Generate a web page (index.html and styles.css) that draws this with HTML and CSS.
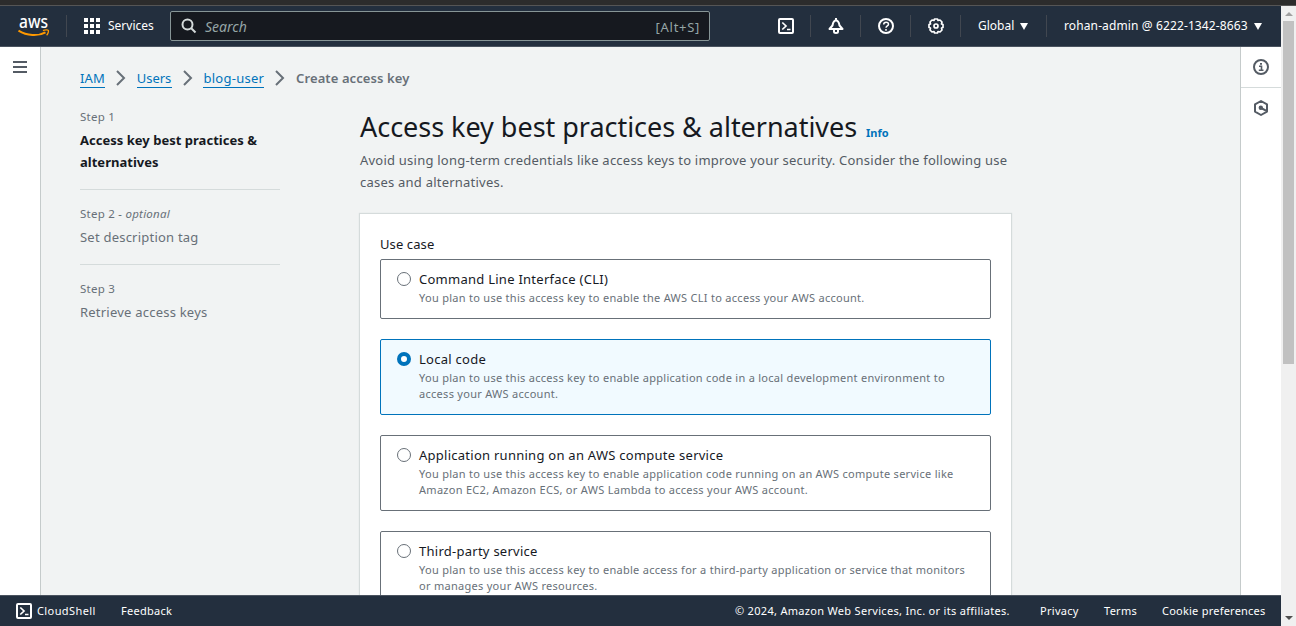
FILE: index.html
```html
<!DOCTYPE html>
<html lang="en">
<head>
<meta charset="utf-8">
<title>Create access key | IAM</title>
<link rel="stylesheet" href="styles.css">
</head>
<body>
<div class="window-edge"></div>
<div class="window">
  <div class="page">
    <header class="topbar">
      <svg class="logo" width="32" height="24" viewBox="0 0 32 24"><text class="logo-text" x="1" y="12.500" textLength="29" lengthAdjust="spacingAndGlyphs">aws</text><path d="M.5 15.700C9 21 20 21.500 27.500 17.300" fill="none" stroke="#f90" stroke-width="2"/><path d="M25 15.700c2-1 4.800-1 5.300-.400.500.8-.2 3.500-1.700 5" fill="none" stroke="#f90" stroke-width="1.300"/></svg>
      <span class="rule rule-logo"></span>
      <svg class="grid-icon" width="16" height="16" viewBox="0 0 16 16" fill="#fff"><path d="M0 0h4v4H0zM6 0h4v4H6zM12 0h4v4h-4zM0 6h4v4H0zM6 6h4v4H6zM12 6h4v4h-4zM0 12h4v4H0zM6 12h4v4H6zM12 12h4v4h-4z"/></svg>
      <span class="services">Services</span>
      <div class="search">
        <svg width="16" height="16" viewBox="0 0 16 16" fill="none" stroke="#d5dbdb" stroke-width="2"><circle cx="6.500" cy="6.500" r="5"/><path d="M10 10l4.500 4.500"/></svg>
        <span class="search-hint">Search</span><span class="search-key">[Alt+S]</span>
      </div>
      <nav class="tools">
        <span class="tool"><svg width="16" height="16" viewBox="0 0 16 16" fill="none" stroke="#fff" stroke-width="2"><rect x="1" y="1" width="14" height="14" rx="1"/><path d="M4.300 4.500L8 8l-3.700 3.500M9 11.500h3.500" stroke-width="1.700"/></svg></span>
        <span class="tool"><svg width="16" height="16" viewBox="0 0 16 16" fill="none" stroke="#fff" stroke-width="2"><path d="M8 0v2M1.500 11h13L11.500 7.500C11 4.500 10 2.500 8 2.500S5 4.500 4.500 7.500z" stroke-linejoin="round"/><path d="M6 12v1.500c0 2 4 2 4 0V12"/></svg></span>
        <span class="tool"><svg width="16" height="16" viewBox="0 0 16 16" fill="none" stroke="#fff" stroke-width="2"><circle cx="8" cy="8" r="7"/><path d="M5.700 6.500c0-3.200 4.800-3 4.800-.3C10.500 8 8 7.800 8 9.800M8 11v1.700" stroke-width="1.500"/></svg></span>
        <span class="tool"><svg width="16" height="16" viewBox="0 0 16 16" fill="none" stroke="#fff" stroke-width="1.700"><path d="M6.500 1h3l.5 1.500 2-.5 2 2-.5 2 1.500.5v3L13.500 10l.5 2-2 2-2-.5-.5 1.500h-3L6 13.500 4 14l-2-2 .5-2L1 9.500v-3L2.500 6 2 4l2-2 2 .5z" stroke-linejoin="round"/><circle cx="8" cy="8" r="2"/></svg></span>
      </nav>
      <span class="region">Global</span><span class="caret"></span>
      <span class="rule rule-account"></span>
      <span class="account">rohan-admin @ 6222-1342-8663</span><span class="caret"></span>
    </header>
    <div class="body">
      <aside class="side-left"><svg width="14" height="12" viewBox="0 0 14 12"><path d="M0 1h14M0 6h14M0 11h14" stroke="#545b64" stroke-width="2"/></svg></aside>
      <main class="content">
        <nav class="crumbs">
          <a class="crumb crumb-iam">IAM</a><svg class="chevron" width="10" height="16" viewBox="0 0 10 16"><path d="M1 1l7 7-7 7"/></svg>
          <a class="crumb crumb-users">Users</a><svg class="chevron" width="10" height="16" viewBox="0 0 10 16"><path d="M1 1l7 7-7 7"/></svg>
          <a class="crumb crumb-blog">blog-user</a><svg class="chevron" width="10" height="16" viewBox="0 0 10 16"><path d="M1 1l7 7-7 7"/></svg>
          <span class="crumb-current">Create access key</span>
        </nav>
        <div class="columns">
          <ol class="steps">
            <li class="step step-active"><div class="step-no">Step 1</div><div class="step-name">Access key best practices &amp;<br>alternatives</div></li>
            <li class="step"><div class="step-no">Step 2 <i>- optional</i></div><div class="step-name">Set description tag</div></li>
            <li class="step"><div class="step-no">Step 3</div><div class="step-name">Retrieve access keys</div></li>
          </ol>
          <section class="wizard">
            <div class="title-row"><h1 class="title">Access key best practices &amp; alternatives</h1><a class="info">Info</a></div>
            <p class="intro">Avoid using long-term credentials like access keys to improve your security. Consider the following use<br>cases and alternatives.</p>
            <div class="card">
              <div class="field-label">Use case</div>
              <div class="option"><span class="radio"></span><div><div class="option-name">Command Line Interface (CLI)</div><div class="option-text">You plan to use this access key to enable the AWS CLI to access your AWS account.</div></div></div>
              <div class="option option-on"><span class="radio radio-on"></span><div><div class="option-name">Local code</div><div class="option-text">You plan to use this access key to enable application code in a local development environment to<br>access your AWS account.</div></div></div>
              <div class="option"><span class="radio"></span><div><div class="option-name">Application running on an AWS compute service</div><div class="option-text">You plan to use this access key to enable application code running on an AWS compute service like<br>Amazon EC2, Amazon ECS, or AWS Lambda to access your AWS account.</div></div></div>
              <div class="option"><span class="radio"></span><div><div class="option-name">Third-party service</div><div class="option-text">You plan to use this access key to enable access for a third-party application or service that monitors<br>or manages your AWS resources.</div></div></div>
            </div>
          </section>
        </div>
      </main>
      <aside class="side-right">
        <div class="side-cell side-cell-line"><svg width="16" height="16" viewBox="0 0 16 16" fill="none" stroke="#545b64" stroke-width="2"><circle cx="8" cy="8" r="7"/><path d="M6 7.200h2.500V11M5.800 11.300h4.700" stroke-width="1.600"/><path d="M7 4.800h2" stroke-width="1.800"/></svg></div>
        <div class="side-cell side-cell-hex"><svg width="16" height="16" viewBox="0 0 16 16" fill="none" stroke="#545b64" stroke-width="2"><path d="M8 1l6 3.400v7.200L8 15l-6-3.400V4.400z" stroke-linejoin="round"/><path d="M8 8l5.500 2.800"/><circle cx="7.800" cy="7.800" r="1.200" fill="#545b64"/></svg></div>
      </aside>
    </div>
    <footer class="footer">
      <svg width="16" height="16" viewBox="0 0 16 16" fill="none" stroke="#fff" stroke-width="2"><rect x="1" y="1" width="14" height="14" rx="1"/><path d="M4.300 4.500L8 8l-3.700 3.500M9 11.500h3.500" stroke-width="1.700"/></svg>
      <span class="foot-shell">CloudShell</span><span class="foot-feedback">Feedback</span>
      <span class="foot-copy">© 2024, Amazon Web Services, Inc. or its affiliates.</span>
      <span class="foot-privacy">Privacy</span><span class="foot-terms">Terms</span><span class="foot-cookie">Cookie preferences</span>
    </footer>
  </div>
  <div class="scrollbar"><span class="arrow-up"></span><span class="thumb"></span><span class="arrow-down"></span></div>
</div>
</body>
</html>
```
FILE: styles.css
```css
* { box-sizing: border-box; }
body { margin: 0; width: 1296px; height: 626px; overflow: hidden; font-family: "Noto Sans", sans-serif; font-size: 13px; color: #16191f; background: #f1f3f3; }
svg { display: block; flex: none; }
span, a { white-space: nowrap; }
.window-edge { height: 6px; background: #2c2c2c; border-bottom: 1px solid #555; }
.window { display: flex; height: 620px; }
.page { width: 1281px; display: flex; flex-direction: column; }
.topbar { height: 41px; flex: none; display: flex; align-items: center; background: #232f3e; border-bottom: 1px solid #4a535f; padding-left: 18px; color: #fff; font-size: 12px; }
.logo { margin-top: 1px; overflow: visible; }
.logo-text { font: 500 18px "Noto Sans", sans-serif; fill: #fff; }
.rule { width: 1px; height: 22px; background: #414750; }
.rule-logo { margin-left: 16px; }
.grid-icon { margin-left: 17px; }
.services { margin-left: 8px; width: 62px; padding-bottom: 1px; }
.search { width: 540px; height: 30px; background: #16191f; border: 1px solid #879596; border-radius: 2px; display: flex; align-items: center; padding: 0 9px 0 10px; color: #95a5a6; font-size: 14px; }
.search-hint { margin-left: 8px; flex: 1; font-style: italic; padding-top: 1px; }
.search-key { font-size: 13px; letter-spacing: .7px; padding-top: 1px; }
.tools { display: flex; margin-left: 51px; }
.tool { width: 50px; height: 22px; display: flex; align-items: center; justify-content: center; border-right: 1px solid #414750; }
.region { margin-left: 17px; width: 37px; padding-bottom: 1px; }
.caret { border: 4px solid transparent; border-top: 7px solid #fff; border-bottom: 0; margin-left: 5px; }
.rule-account { margin-left: 18px; }
.account { margin-left: 17px; width: 185px; letter-spacing: .12px; padding-bottom: 1px; }
.body { flex: 1; min-height: 0; display: flex; }
.side-left { width: 41px; background: #fff; border-right: 1px solid #c5cbcb; padding: 14px 0 0 13px; }
.content { flex: 1; padding: 20px 0 0 39px; overflow: hidden; }
.crumbs { height: 22px; display: flex; align-items: center; }
.crumb { color: #0073bb; border-bottom: 1px solid #0073bb; line-height: 18px; margin-top: 1px; }
.crumb-iam { width: 25px; letter-spacing: .15px; }
.crumb-users { width: 35px; }
.crumb-blog { width: 61px; letter-spacing: .28px; }
.chevron { margin: 0 10.700px 0 11px; fill: none; stroke: #687078; stroke-width: 2; }
.crumb-current { color: #687078; font-weight: 600; letter-spacing: .1px; }
.columns { display: flex; margin-top: 17px; }
.steps { list-style: none; margin: 0; padding: 0; width: 200px; }
.step { border-bottom: 1px solid #d5dbdb; padding-bottom: 16px; margin-bottom: 13px; color: #687078; }
.step:last-child { border: 0; }
.step-no { font-size: 11.500px; letter-spacing: .25px; line-height: 22px; }
.step-name { line-height: 22px; margin-top: 1px; letter-spacing: .22px; white-space: nowrap; }
.step-active .step-name { color: #16191f; font-weight: 700; letter-spacing: .02px; }
.wizard { margin-left: 80px; width: 651px; }
.title-row { display: flex; align-items: baseline; height: 43px; padding-top: 1px; }
.title { margin: 0; font-size: 27px; line-height: 40px; font-weight: 400; white-space: nowrap; width: 498px; letter-spacing: -.03px; }
.info { color: #0073bb; font-weight: 700; font-size: 11px; margin-left: 8px; }
.intro { margin: 0; line-height: 22px; color: #545b64; white-space: nowrap; letter-spacing: .225px; }
.card { background: #fff; margin-top: 21px; height: 420px; padding: 19px 20px 20px; box-shadow: 0 0 1px 1px #d5dbdb; }
.field-label { line-height: 22px; margin-bottom: 4px; letter-spacing: .1px; }
.option { display: flex; border: 1px solid #687078; border-radius: 2px; padding: 8px 0 12px 16px; margin-bottom: 20px; width: 611px; }
.option-on { border-color: #0073bb; background: #f1faff; }
.radio { flex: none; width: 14px; height: 14px; border: 1px solid #687078; border-radius: 50%; margin: 4px 8px 0 0; background: #fff; }
.radio-on { border: 4px solid #0073bb; }
.option-name { line-height: 22px; letter-spacing: .26px; }
.option-text { font-size: 11px; line-height: 16px; color: #687078; white-space: nowrap; letter-spacing: .285px; }
.side-right { width: 41px; background: #fff; border-left: 1px solid #c5cbcb; }
.side-cell { height: 41px; display: flex; align-items: center; justify-content: center; }
.side-cell-line { border-bottom: 1px solid #d5dbdb; }
.side-cell-hex { height: 40px; }
.footer { height: 31px; flex: none; background: #232f3e; border-top: 1px solid #4a535f; color: #fff; display: flex; align-items: center; padding: 0 16px; font-size: 11px; letter-spacing: .28px; }
.footer span { padding-bottom: 1px; }
.foot-shell { margin-left: 5px; width: 84px; letter-spacing: .4px; }
.foot-copy { margin-left: auto; width: 275px; letter-spacing: .305px; }
.foot-privacy { margin-left: 30px; width: 39px; }
.foot-terms { margin-left: 25px; width: 33px; }
.foot-cookie { margin-left: 25px; width: 103px; letter-spacing: .23px; }
.scrollbar { width: 15px; background: #f0f0f0; display: flex; flex-direction: column; align-items: center; }
.arrow-up { border: 4px solid transparent; border-bottom: 4px solid #a0a0a0; border-top: 0; margin: 6px 0 5px; }
.thumb { width: 11px; height: 343px; background: #c1c1c1; }
.arrow-down { border: 4px solid transparent; border-top: 4px solid #505050; border-bottom: 0; margin: auto 0 6px; }
```
